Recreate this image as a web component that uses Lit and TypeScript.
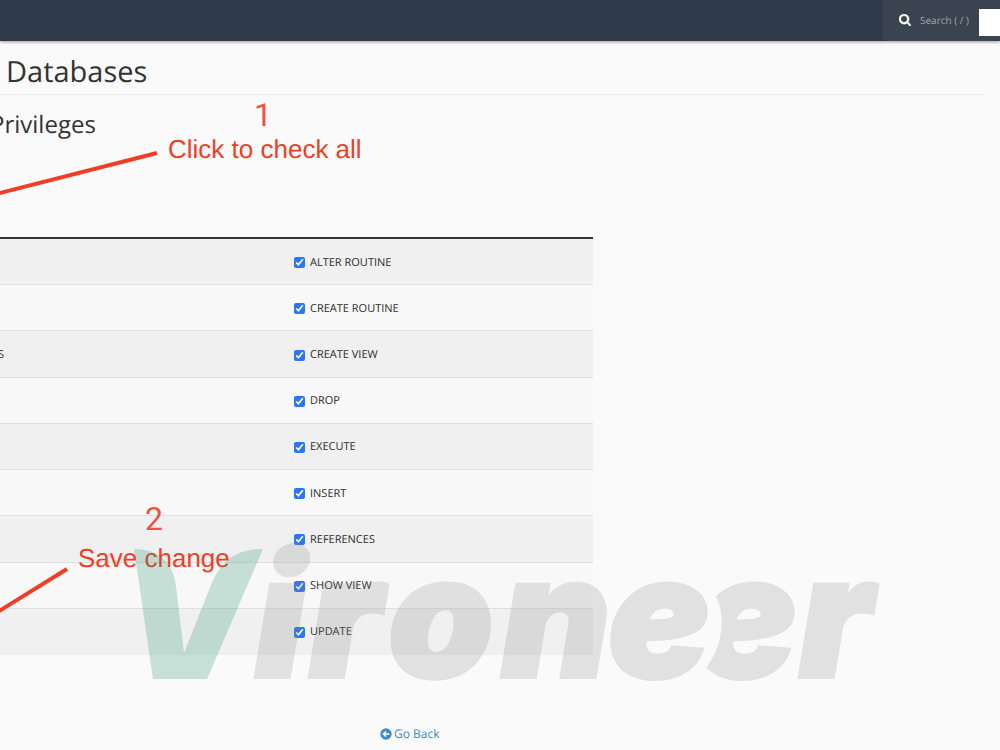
import { LitElement, html, css } from "lit";
import { customElement } from "lit/decorators.js";

interface Row {
  left: string;
  privilege: string;
}

const ROWS: Row[] = [
  { left: "", privilege: "ALTER ROUTINE" },
  { left: "", privilege: "CREATE ROUTINE" },
  { left: "S", privilege: "CREATE VIEW" },
  { left: "", privilege: "DROP" },
  { left: "", privilege: "EXECUTE" },
  { left: "", privilege: "INSERT" },
  { left: "", privilege: "REFERENCES" },
  { left: "", privilege: "SHOW VIEW" },
  { left: "", privilege: "UPDATE" },
];

@customElement("top-bar")
export class TopBar extends LitElement {
  static styles = css`
    :host {
      display: block;
      position: relative;
      z-index: 1;
    }
    .bar {
      display: flex;
      justify-content: flex-end;
      height: 41px;
      background: #2f3a4a;
      box-shadow: 0 1px 3px rgba(0, 0, 0, 0.4);
    }
    .search {
      display: flex;
      align-items: center;
      gap: 9px;
      padding: 0 10px 0 16px;
      background: #3a4451;
    }
    .icon {
      width: 12px;
      height: 12px;
      margin-bottom: 1px;
    }
    .field {
      width: 49px;
      padding: 0 0 1px;
      border: 0;
      outline: 0;
      background: transparent;
      color: #fff;
      font: 10px "Open Sans", sans-serif;
      text-rendering: geometricPrecision;
    }
    .field::placeholder {
      color: #a0a5ab;
      opacity: 1;
    }
    .panel {
      width: 21px;
      height: 27px;
      align-self: center;
      margin-top: 4px;
      background: #fff;
    }
    .tail {
      display: flex;
      background: #3a4451;
    }
  `;

  render() {
    return html`<header class="bar">
      <label class="search">
        <svg class="icon" viewBox="0 0 1664 1664" aria-hidden="true">
          <path
            fill="#fff"
            stroke="#fff"
            stroke-width="50"
            d="M1152 704q0-185-131.500-316.500T704 256 387.500 387.500 256 704t131.500 316.500T704 1152t316.500-131.500T1152 704zm512 832q0 52-38 90t-90 38q-54 0-90-38l-343-342q-179 124-399 124-143 0-273.500-55.500t-225-150-150-225T0 704t55.500-273.500 150-225 225-150T704 0t273.500 55.500 225 150 150 225T1408 704q0 220-124 399l343 343q37 37 37 90z"
          />
        </svg>
        <input class="field" type="text" placeholder="Search ( / )" aria-label="Search" />
      </label>
      <div class="tail"><div class="panel"></div></div>
    </header>`;
  }
}

@customElement("privilege-table")
export class PrivilegeTable extends LitElement {
  static styles = css`
    :host {
      display: block;
    }
    .table {
      width: 100%;
      height: 418px;
      border-collapse: separate;
      border-spacing: 0;
      border-top: 2px solid #333;
      table-layout: fixed;
      font-size: 11px;
      line-height: 20px;
      color: #2a2a2a;
    }
    .cell {
      padding: 2px 0 0;
      border-bottom: 1px solid #dfdfdf;
      background: #f8f8f8;
    }
    .row:nth-child(odd) .cell {
      background: #f0f0f0;
    }
    .row:last-child .cell {
      border-bottom-color: #f0f0f0;
    }
    .label {
      display: flex;
      align-items: center;
      gap: 5px;
    }
    .box {
      width: 11px;
      height: 11px;
      margin: 0;
      accent-color: #2a76fa;
    }
    .left {
      margin-left: -2px;
    }
  `;

  render() {
    return html`<table class="table">
      <colgroup>
        <col style="width: 294px" />
        <col />
      </colgroup>
      <tbody>
        ${ROWS.map(
          (r) => html`<tr class="row">
            <td class="cell"><div class="left">${r.left}</div></td>
            <td class="cell">
              <label class="label"><input class="box" type="checkbox" checked />${r.privilege}</label>
            </td>
          </tr>`
        )}
      </tbody>
    </table>`;
  }
}

@customElement("app-root")
export class AppRoot extends LitElement {
  static styles = css`
    :host {
      display: block;
      position: relative;
      min-height: 100vh;
      overflow: hidden;
      background: #fafafa;
      color: #333;
      font-family: "Open Sans", sans-serif;
      text-rendering: geometricPrecision;
    }
    .title {
      margin: 0 14px 0 0;
      padding: 11px 0 2px;
      border-bottom: 1px solid #eee;
      font-size: 29px;
      font-weight: 400;
      line-height: 40px;
      text-indent: 6px;
    }
    .subtitle {
      margin: 14px 0 0 -10px;
      font-size: 24px;
      font-weight: 400;
      line-height: 32px;
    }
    .content {
      width: 593px;
      max-width: 100%;
      margin-top: 96px;
    }
    .back {
      display: flex;
      align-items: center;
      gap: 2px;
      width: max-content;
      margin: 69px 0 0 380px;
      color: #428bca;
      font-size: 12px;
      line-height: 20px;
      text-decoration: none;
    }
    .back-icon {
      width: 12px;
      height: 12px;
    }
    .overlay {
      position: absolute;
      left: 0;
      top: 0;
      width: 1000px;
      height: 750px;
      pointer-events: none;
    }
    .note {
      fill: #f03e26;
      font: 26px "Liberation Sans", sans-serif;
    }
    .step {
      fill: #f2503d;
      font: 32px Roboto, sans-serif;
    }
    .arrow {
      stroke: #f03e26;
      stroke-width: 4;
    }
    .wordmark {
      font: italic 900 169px Inter, sans-serif;
      fill: #828282;
      stroke: #828282;
      stroke-width: 4;
    }
  `;

  render() {
    return html`
      <top-bar></top-bar>
      <main>
        <h1 class="title">Databases</h1>
        <h2 class="subtitle">Privileges</h2>
        <privilege-table class="content"></privilege-table>
        <a class="back" href="#">
          <svg class="back-icon" viewBox="0 0 12 12" aria-hidden="true">
            <circle cx="6" cy="6" r="5.700" fill="#428bca" />
            <path d="M9.200 6H3.500M5.900 3.500L3.400 6l2.500 2.500" fill="none" stroke="#fff" stroke-width="1.500" />
          </svg>
          Go Back
        </a>
      </main>
      <svg class="overlay" viewBox="0 0 1000 750">
        <line class="arrow" x1="-4" y1="194" x2="157" y2="153" />
        <line class="arrow" x1="-4" y1="613" x2="67" y2="569" />
        <text class="step" x="254" y="126">1</text>
        <text class="note" x="168" y="158">Click to check all</text>
        <text class="step" x="145" y="530">2</text>
        <text class="note" x="78" y="567">Save change</text>
        <g opacity="0.25" fill="#2a9272">
          <path d="M134 549C157 549 173 560 176 586L184 653L211 585C221 561 236 549 263 549L207 679H153Z" />
        </g>
        <mask id="cut" maskUnits="userSpaceOnUse" x="0" y="500" width="1000" height="250">
          <rect x="0" y="500" width="1000" height="250" fill="#fff" />
          <path d="M706 570L714 594C726 610 725 648 703 671L690 700H600V570Z" fill="#000" />
        </mask>
        <g opacity="0.2">
          <text class="wordmark" x="255 309 388 501 608" y="677">irone</text>
          <g mask="url(#cut)">
            <text class="wordmark" x="695 799" y="677">er</text>
          </g>
        </g>
      </svg>
    `;
  }
}
